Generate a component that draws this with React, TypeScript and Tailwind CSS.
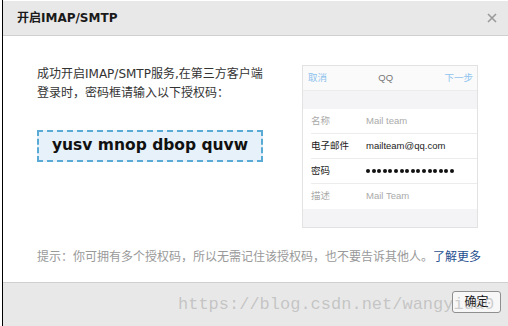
import React from "react";

const cjk = "font-['DejaVu_Sans','Noto_Sans_CJK_SC',sans-serif]";
const phoneFont = "font-['Liberation_Sans','Noto_Sans_CJK_SC',sans-serif]";

const rows = [
  { label: "名称", value: "Mail team", muted: true },
  { label: "电子邮件", value: "mailteam@qq.com", muted: false },
  { label: "密码", value: "", muted: false, dots: true },
  { label: "描述", value: "Mail Team", muted: true },
];

const PhonePreview: React.FC = () => (
  <div className={`flex h-[163px] w-[176px] flex-col border border-[#e2e2e2] bg-[#f4f4f6] ${phoneFont}`}>
    <div className="flex h-[25px] items-center justify-between border-b border-[#ececec] bg-[#fafafa] pl-[5px] pr-[4px] text-[9.5px]">
      <span className="text-[#8ec3ee]">取消</span>
      <span className="text-[#777]">QQ</span>
      <span className="text-[#8ec3ee]">下一步</span>
    </div>
    <div className="h-[18px]" />
    <div className="bg-white pl-[8px]">
      {rows.map((row, idx) => (
        <div
          key={idx}
          className={
            "flex h-[25px] items-center text-[9.5px] " +
            (idx < rows.length - 1 ? "border-b border-[#ececec]" : "")
          }
        >
          <span className={"w-[55px] " + (row.muted ? "text-[#aaa]" : "text-[#222]")}>
            {row.label}
          </span>
          {row.dots ? (
            <span className="flex gap-[1.6px]">
              {Array.from({ length: 16 }).map((_, i) => (
                <span key={i} className="h-[4px] w-[4px] rounded-full bg-[#111]" />
              ))}
            </span>
          ) : (
            <span className={row.muted ? "text-[#aaa]" : "text-[#222]"}>{row.value}</span>
          )}
        </div>
      ))}
    </div>
  </div>
);

export default function App() {
  return (
    <div className="relative h-[326px] w-[508px] overflow-hidden bg-white pl-[2px]">
      <div className="flex h-full flex-col border-l border-black">
        {/* header */}
        <div className="mt-[1px] flex h-[35px] items-center justify-between border-b border-[#cfcfcf] bg-[#e8e8e8] pl-[14px] pr-[11px]">
          <span className={`text-[12px] font-bold text-[#1a1a1a] ${cjk}`}>开启IMAP/SMTP</span>
          <svg width="10" height="10" viewBox="0 0 10 10">
            <path d="M1 1L9 9M9 1L1 9" stroke="#9a9a9a" strokeWidth="1.6" />
          </svg>
        </div>

        {/* body */}
        <div className={`flex flex-1 flex-col pl-[34px] pt-[29px] ${cjk}`}>
          <div className="flex">
            <div className="flex w-[226px] flex-col">
              <p className="text-[12px] leading-[19px] text-[#333]">
                成功开启IMAP/SMTP服务,在第三方客户端
                <br />
                登录时，密码框请输入以下授权码：
              </p>
              <div className="mt-[27px] flex h-[32px] items-center justify-center border-2 border-dashed border-[#5aaad6] bg-[#e7f1f9]">
                <span className="text-[15.5px] font-bold tracking-[0px] text-[#111]">
                  yusv mnop dbop quvw
                </span>
              </div>
            </div>
            <div className="ml-[39px]">
              <PhonePreview />
            </div>
          </div>
          <p className="mt-[19px] text-[12px] leading-[20px] text-[#999]">
            提示：你可拥有多个授权码，所以无需记住该授权码，也不要告诉其他人。
            <span className="text-[#1f4f8f]">了解更多</span>
          </p>
        </div>

        {/* footer */}
        <div className="flex h-[44px] justify-end border-t border-[#cfcfcf] bg-[#e8e8e8] pr-[7px] pt-[8px]">
          <button className={`flex h-[22px] w-[49px] items-center justify-center rounded-[3px] border border-[#8f8f8f] bg-[#f7f7f7] text-[12px] text-[#111] ${cjk}`}>
            确定
          </button>
        </div>
      </div>

      {/* watermark */}
      <div className="pointer-events-none absolute left-[178px] top-[294px] font-['Liberation_Mono',monospace] text-[17px] leading-[22px] text-[rgba(140,140,140,0.4)]">
        https://blog.csdn.net/wangyida0
      </div>
    </div>
  );
}
